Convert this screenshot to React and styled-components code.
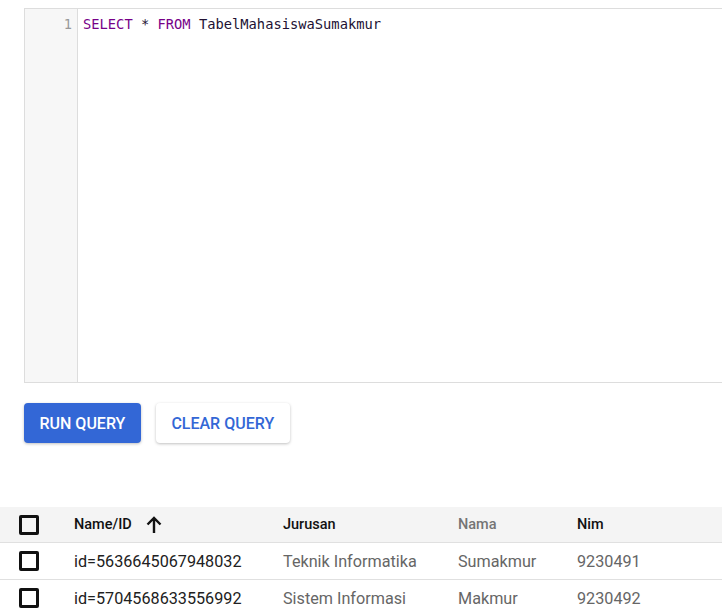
import React from "react";
import styled, { createGlobalStyle } from "styled-components";

const GlobalStyle = createGlobalStyle`
  body {
    margin: 0;
    background: #fff;
    font-family: Roboto, "Liberation Sans", sans-serif;
    overflow: hidden;
  }
`;

const Page = styled.div`
  padding-top: 8px;
  width: 722px;
  overflow: hidden;
`;

const Editor = styled.div`
  margin-left: 24px;
  width: 720px;
  height: 373px;
  border: 1px solid #ddd;
  display: flex;
  background: #fff;
`;

const Gutter = styled.div`
  width: 53px;
  background: #f7f7f7;
  border-right: 1px solid #ddd;
  text-align: right;
  padding: 5px 5px 0 0;
  box-sizing: border-box;
  font-family: "DejaVu Sans Mono", monospace;
  font-size: 13.7px;
  line-height: 20px;
  color: #999;
`;

const Code = styled.div`
  padding: 5px 0 0 5px;
  font-family: "DejaVu Sans Mono", monospace;
  font-size: 13.75px;
  line-height: 20px;
  color: #221133;
  white-space: pre;
`;

const Kw = styled.span`
  color: #770088;
`;

const Actions = styled.div`
  display: flex;
  gap: 15px;
  margin: 20px 0 0 24px;
`;

const Button = styled.button`
  height: 40px;
  padding: 0 15.5px;
  border: none;
  border-radius: 4px;
  font-family: Roboto, "Liberation Sans", sans-serif;
  font-weight: 500;
  font-size: 16px;
  text-transform: uppercase;
  cursor: pointer;
  background: ${(p) => (p.$primary ? "#3367d6" : "#fff")};
  color: ${(p) => (p.$primary ? "#fff" : "#3367d6")};
  box-shadow: 0 1px 3px rgba(0, 0, 0, 0.25);
`;

const Table = styled.div`
  margin-top: 64px;
  width: 722px;
`;

const Row = styled.div`
  display: grid;
  grid-template-columns: 60px 209px 175px 119px 1fr;
  align-items: center;
  height: ${(p) => (p.$head ? "35px" : "36px")};
  background: ${(p) => (p.$head ? "#f4f4f4" : "#fff")};
  border-bottom: 1px solid #e0e0e0;
`;

const Cell = styled.div`
  padding-left: 14px;
  font-size: ${(p) => (p.$head ? "14.5px" : "16.2px")};
  font-weight: ${(p) => (p.$head ? 500 : 400)};
  color: ${(p) => p.$color || "#212121"};
  display: flex;
  align-items: center;
  white-space: nowrap;
`;

const BoxCell = styled.div`
  padding-left: 19px;
  display: flex;
  align-items: center;
`;

const Checkbox = styled.span`
  width: 14px;
  height: 14px;
  border: 3px solid #111;
  border-radius: 2px;
  display: inline-block;
`;

const SortIcon = styled.svg`
  margin-left: 14px;
`;

const rows = [
  { id: "id=5636645067948032", jurusan: "Teknik Informatika", nama: "Sumakmur", nim: "9230491" },
  { id: "id=5704568633556992", jurusan: "Sistem Informasi", nama: "Makmur", nim: "9230492" },
];

export default function App() {
  return (
    <Page>
      <GlobalStyle />
      <Editor>
        <Gutter>1</Gutter>
        <Code>
          <Kw>SELECT</Kw> * <Kw>FROM</Kw> TabelMahasiswaSumakmur
        </Code>
      </Editor>
      <Actions>
        <Button $primary>Run Query</Button>
        <Button>Clear Query</Button>
      </Actions>
      <Table>
        <Row $head>
          <BoxCell>
            <Checkbox />
          </BoxCell>
          <Cell $head $color="#111">
            Name/ID
            <SortIcon width="16" height="18" viewBox="0 0 16 18">
              <path d="M8 2 V17 M1.5 8.5 L8 2 L14.5 8.5" stroke="#111" strokeWidth="2.4" fill="none" />
            </SortIcon>
          </Cell>
          <Cell $head $color="#111">Jurusan</Cell>
          <Cell $head $color="#757575">Nama</Cell>
          <Cell $head $color="#111">Nim</Cell>
        </Row>
        {rows.map((r) => (
          <Row key={r.id}>
            <BoxCell>
              <Checkbox />
            </BoxCell>
            <Cell $color="#212121">{r.id}</Cell>
            <Cell $color="#666">{r.jurusan}</Cell>
            <Cell $color="#666">{r.nama}</Cell>
            <Cell $color="#666">{r.nim}</Cell>
          </Row>
        ))}
      </Table>
    </Page>
  );
}
